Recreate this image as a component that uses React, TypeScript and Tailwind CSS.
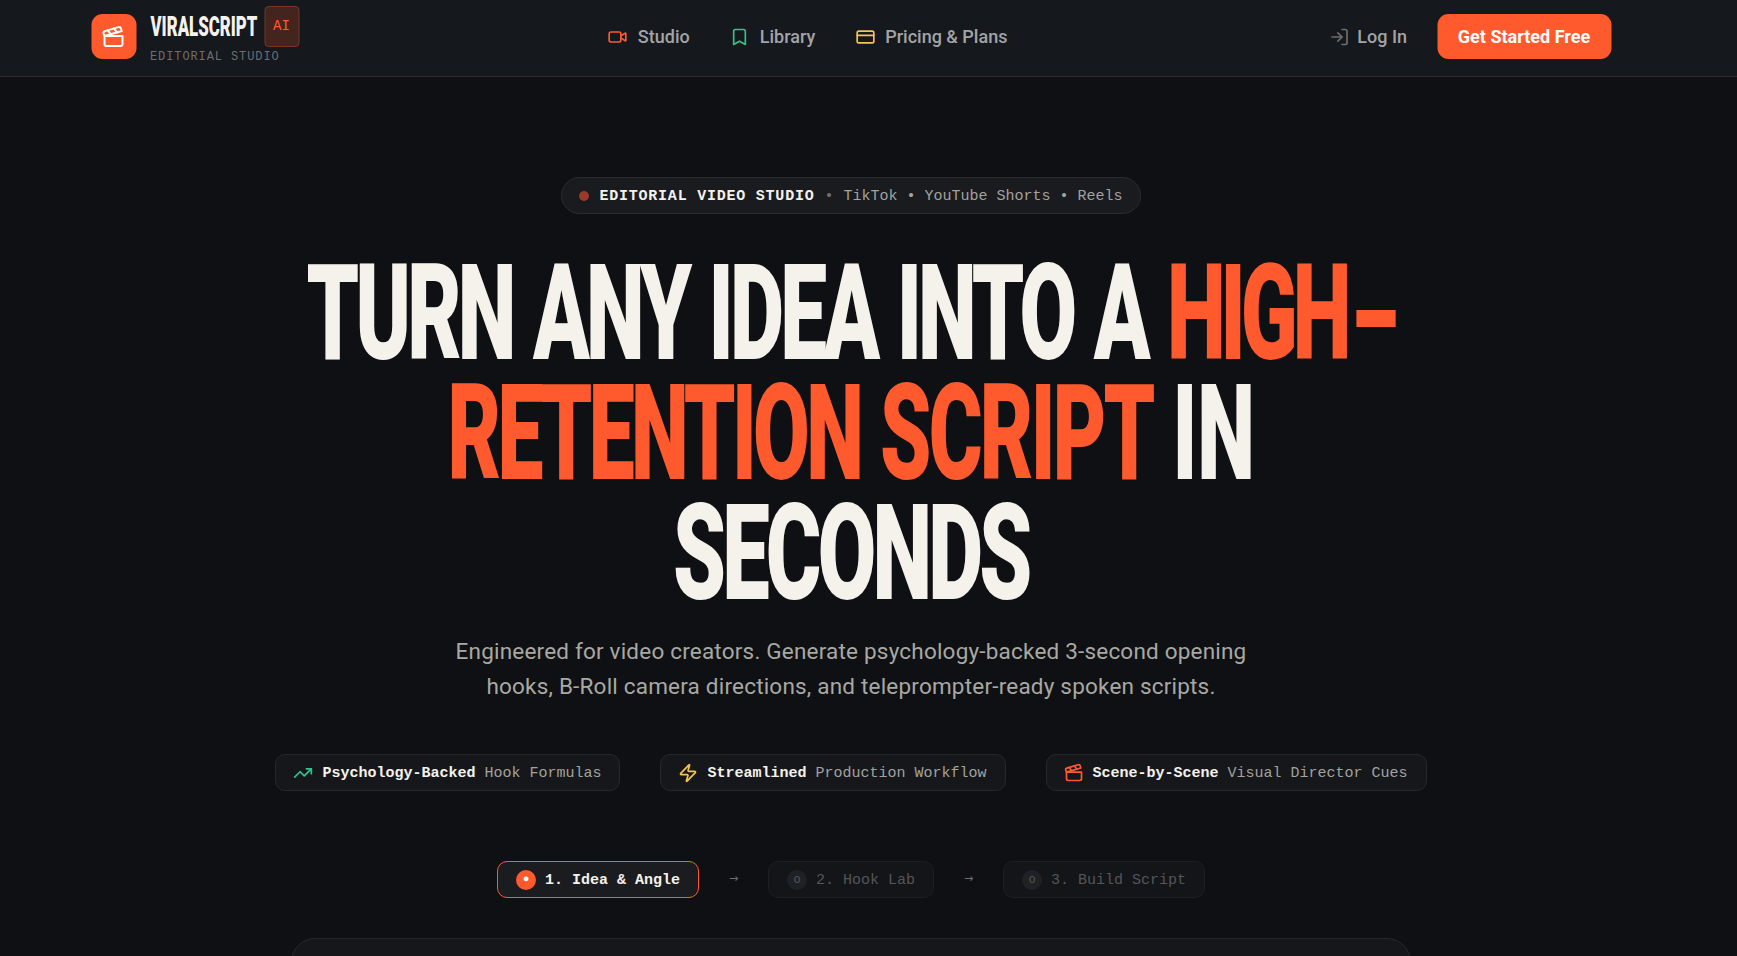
import React from "react";
import { Clapperboard, Video, Bookmark, CreditCard, LogIn, TrendingUp, Zap } from "lucide-react";

const mono = "font-['Liberation_Mono','DejaVu_Sans_Mono',monospace]";
const sans = "font-['Roboto','Noto_Sans',sans-serif]";
const display = "font-['Roboto','Liberation_Sans',sans-serif]";

function HeadLine({ children, scale }: { children: React.ReactNode; scale: string }) {
  return (
    <div className="flex h-[120px] w-full justify-center">
      <span className={`shrink-0 whitespace-nowrap tracking-[-6px] [word-spacing:5px] ${scale}`}>{children}</span>
    </div>
  );
}

function Pill({ icon, strong, rest }: { icon: React.ReactNode; strong: string; rest: string }) {
  return (
    <div className="flex h-[37px] items-center gap-[9px] rounded-[10px] border border-[#26282d] bg-[#15171b] pl-[17px] pr-[18px]">
      {icon}
      <span className={`${mono} whitespace-nowrap pt-[3px] text-[15px] text-[#a3a29d]`}>
        <b className="font-bold text-[#f5f2ec]">{strong}</b> {rest}
      </span>
    </div>
  );
}

function Step({ label, active }: { label: string; active?: boolean }) {
  return (
    <div
      className={`flex h-[37px] items-center gap-[9px] rounded-[10px] border px-[18px] ${
        active ? "border-[#ff5a2e] bg-[#1a1c20]" : "border-[#1c1e22] bg-[#131518]"
      }`}
    >
      <span
        className={`${mono} flex h-[20px] w-[20px] items-center justify-center rounded-full ${
          active ? "bg-[#ff5a2e] text-[11px] text-white" : "bg-[#1f2125] text-[12px] text-[#55565a]"
        }`}
      >
        {active ? "●" : "o"}
      </span>
      <span className={`${mono} whitespace-nowrap pt-[3px] text-[15px] ${active ? "font-bold text-[#f5f2ec]" : "text-[#55565a]"}`}>{label}</span>
    </div>
  );
}

function Arrow() {
  return <span className="flex w-[11px] justify-center font-['DejaVu_Sans',sans-serif] text-[11px] text-[#6d6e70]">→</span>;
}

export default function App() {
  return (
    <div className="h-[956px] overflow-hidden bg-[#0e1013]">
      <header className="h-[77px] border-b border-[#2a2c30] bg-[#15181c] pb-[3px]">
        <div className="mx-auto flex h-full w-[1520px] -translate-x-[17.5px] items-center justify-between">
          <div className="flex items-center gap-[14px]">
            <div className="flex h-[45px] w-[45px] items-center justify-center rounded-[11px] bg-[#ff5a2e]">
              <Clapperboard size={24} color="#fff" strokeWidth={2} />
            </div>
            <div className="flex flex-col pb-[2px]">
              <div className="flex items-center gap-[8px]">
                <span className={`${display} inline-block w-[106px] origin-left scale-x-[0.6] whitespace-nowrap text-[28px] font-black leading-[40px] text-[#f5f2ec]`}>VIRALSCRIPT</span>
                <span className={`${mono} flex h-[41px] w-[35px] items-center justify-center rounded-[4px] border border-[#7a3325] bg-[#43251e] text-[14px] text-[#ff5a2e]`}>AI</span>
              </div>
              <span className={`${mono} mt-[2px] text-[12px] leading-[16px] tracking-[0.9px] text-[#6d6e70]`}>EDITORIAL STUDIO</span>
            </div>
          </div>
          <nav className={`${sans} mr-[13px] flex items-center gap-[40px] text-[18px] font-medium text-[#a3a4a6]`}>
            <a className="flex items-center gap-[10px]"><Video size={20} color="#ff5a2e" />Studio</a>
            <a className="flex items-center gap-[10px]"><Bookmark size={20} color="#34c38a" />Library</a>
            <a className="flex items-center gap-[10px]"><CreditCard size={20} color="#f5c451" />Pricing &amp; Plans</a>
          </nav>
          <div className={`${sans} flex items-center gap-[30px] text-[18px] font-medium`}>
            <a className="flex items-center gap-[8px] text-[#a3a4a6]"><LogIn size={20} color="#6d6e70" />Log In</a>
            <button className="h-[45px] w-[174px] rounded-[11px] bg-[#ff5a2e] font-bold text-white">Get Started Free</button>
          </div>
        </div>
      </header>
      <main className="flex w-[1702px] flex-col items-center pt-[100px]">
        <div className={`${mono} flex h-[37px] items-center gap-[10px] rounded-full border border-[#2a2c30] bg-[#191b1f] px-[17px] text-[15px] text-[#a3a29d]`}>
          <span className="h-[10px] w-[10px] rounded-full bg-[#9a3b2a]" />
          <b className="pt-[4px] font-bold tracking-[0.77px] text-[#f5f2ec]">EDITORIAL VIDEO STUDIO</b>
          <span className="pt-[4px] text-[#6d6e70]">•</span>
          <span className="pt-[4px]">TikTok • YouTube Shorts • Reels</span>
        </div>
        <h1 className={`${display} mt-[40px] w-full text-[133px] font-black leading-[120px] text-[#f5f2ec]`}>
          <HeadLine scale="scale-x-[0.628]">
            TURN ANY IDEA INTO A{" "}
            <span className="text-[#ff5a2e]">
              <span className="tracking-[-8px]">HIGH</span>
              <span className="mr-[24px] inline-block origin-left scale-x-[1.6]">-</span>
            </span>
          </HeadLine>
          <HeadLine scale="scale-x-[0.618]">
            <span className="text-[#ff5a2e]">
              RETENTION <span className="tracking-[-4.5px]">SCRIPT</span>
            </span>{" "}
            <span className="tracking-[0px]">IN</span>
          </HeadLine>
          <HeadLine scale="scale-x-[0.638]">SECONDS</HeadLine>
        </h1>
        <p className={`${sans} mt-[20px] w-[900px] text-center text-[22.5px] leading-[35px] tracking-[0.2px] text-[#a9a8a3]`}>
          Engineered for video creators. Generate psychology-backed 3-second opening
          <br />
          hooks, B-Roll camera directions, and teleprompter-ready spoken scripts.
        </p>
        <div className="mt-[50px] flex gap-[40px]">
          <Pill icon={<TrendingUp size={20} color="#34c38a" />} strong="Psychology-Backed" rest="Hook Formulas" />
          <Pill icon={<Zap size={20} color="#f5c451" />} strong="Streamlined" rest="Production Workflow" />
          <Pill icon={<Clapperboard size={20} color="#ff5a2e" />} strong="Scene-by-Scene" rest="Visual Director Cues" />
        </div>
        <div className="mt-[70px] flex items-center gap-[29px]">
          <Step active label="1. Idea & Angle" />
          <Arrow />
          <Step label="2. Hook Lab" />
          <Arrow />
          <Step label="3. Build Script" />
        </div>
        <div className="mt-[40px] h-[200px] w-[1120px] shrink-0 rounded-[24px] border border-[#26282c] bg-[#15171a]" />
      </main>
    </div>
  );
}
